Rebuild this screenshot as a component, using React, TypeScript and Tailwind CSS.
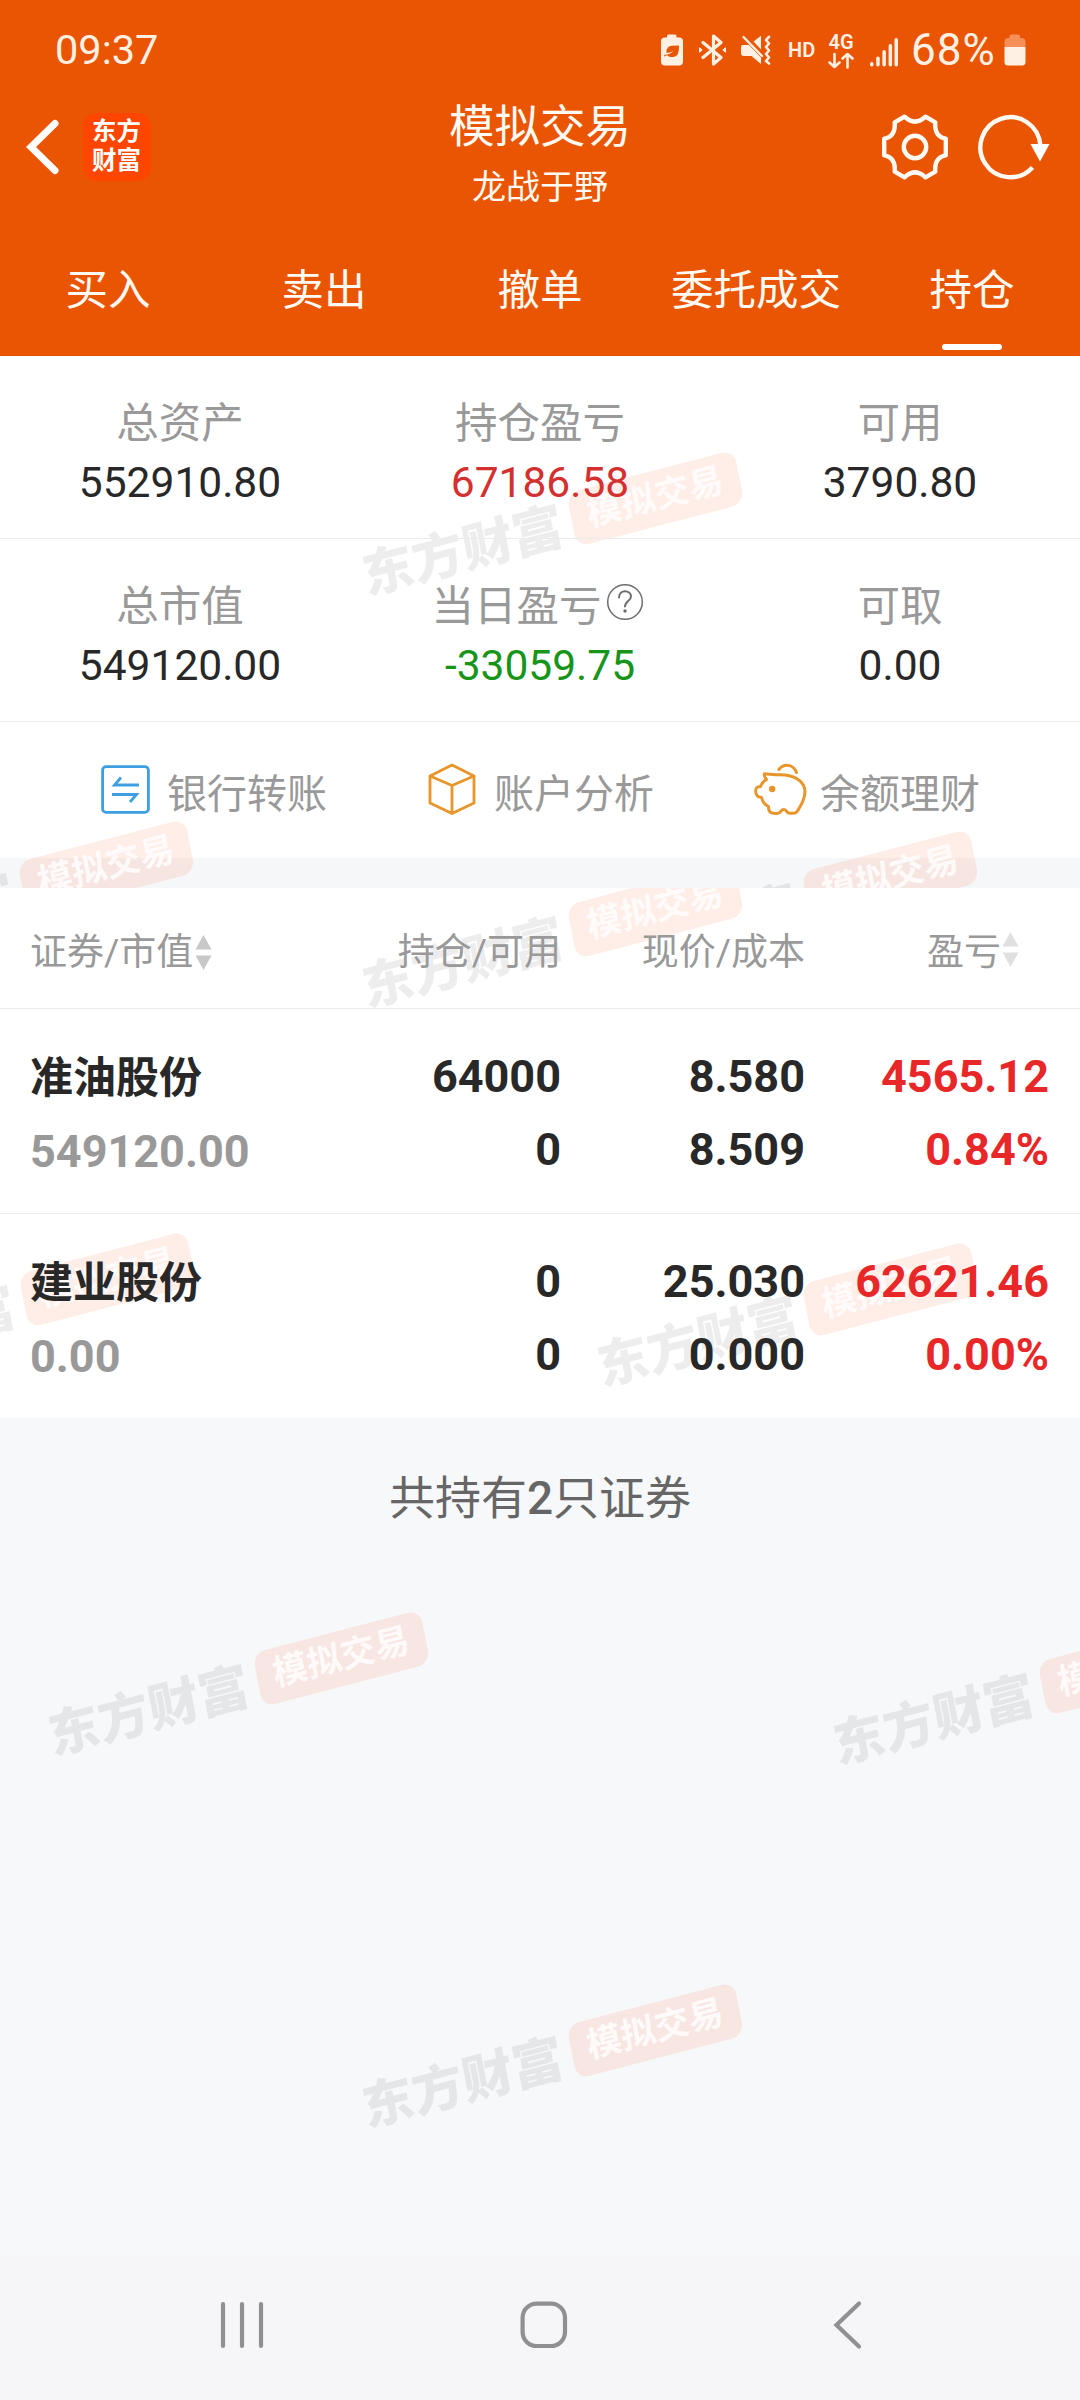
import React from "react";

const CREAM = "#fff0e4";

/* ---------- icons ---------- */

function LeafBattery() {
  return (
    <svg width="22" height="32" viewBox="0 0 22 32">
      <path d="M6 3.5V2Q6 .5 7.500 .5H14Q15.500 .5 15.500 2V3.500H18Q22 3.500 22 7.500V27.500Q22 31.500 18 31.500H4Q0 31.500 0 27.500V7.500Q0 3.500 4 3.500Z" fill={CREAM} />
      <path d="M18 11.500Q18.500 22.500 12.500 23Q8 23.500 6.500 21.500Q3.500 21 3.300 23Q3 22 3.300 20.800Q9 21 12.500 16.500Q9 19.500 5.300 18.500Q5.500 12 11 11.700Z" fill="#ea5504" />
    </svg>
  );
}

function BluetoothIcon() {
  return (
    <svg width="27" height="32" viewBox="0 0 27 32" fill="none" stroke={CREAM} strokeWidth="3.200" strokeLinecap="round" strokeLinejoin="round">
      <path d="M4 8.500 22 23.500 14.500 30V2L22 8.500 4 23.500" />
      <path d="M.8 14 3.200 16 .8 18ZM26.200 14 23.800 16 26.200 18Z" fill={CREAM} strokeWidth="1" />
    </svg>
  );
}

function MuteVibrateIcon() {
  return (
    <svg width="30" height="30" viewBox="0 0 30 30">
      <path d="M1.500 10H8L20 22.500V29L10.500 21H3Q0 21 0 18V12Q0 10 1.500 10Z" fill={CREAM} />
      <path d="M12.500 6.500 20 .8V14.500Z" fill={CREAM} />
      <path d="M2.500 2 21 21" stroke={CREAM} strokeWidth="2.400" strokeLinecap="round" />
      <path d="M28 1.800 25 5 28 8.500 25 12 28 15.500 25 19 28 22.500 25 26 28 28.500" fill="none" stroke={CREAM} strokeWidth="2.600" strokeLinecap="round" strokeLinejoin="round" />
    </svg>
  );
}

function DataArrows() {
  return (
    <svg width="26" height="17" viewBox="0 0 26 17" fill="none" stroke={CREAM} strokeWidth="2.600" strokeLinecap="round" strokeLinejoin="round">
      <path d="M6.500 2V15M1.500 10.500 6.500 15 11.500 10.500M19.500 15.500V2M14.500 6.500 19.500 2 24.500 6.500" />
    </svg>
  );
}

function SignalIcon() {
  return (
    <svg width="28" height="30" viewBox="0 0 28 30" fill={CREAM}>
      <rect x="0" y="25" width="3.500" height="4.500" rx="1.700" />
      <rect x="6.200" y="19.500" width="3.500" height="10" rx="1.700" />
      <rect x="12.400" y="13" width="3.500" height="16.500" rx="1.700" />
      <rect x="18.600" y="7" width="3.500" height="22.500" rx="1.700" />
      <rect x="24.500" y="1" width="3.500" height="28.500" rx="1.700" />
    </svg>
  );
}

function BatteryIcon() {
  return (
    <svg width="22" height="32" viewBox="0 0 22 32">
      <path d="M5.500 4V2.500Q5.500.5 7.500.5H14Q16 .5 16 2.500V4H17.500Q21.500 4 21.500 8V13H.5V8Q.5 4 4.500 4Z" fill="#f68e58" />
      <path d="M.5 13H21.500V28Q21.500 31.500 18 31.500H4Q.5 31.500 .5 28Z" fill={CREAM} />
    </svg>
  );
}

function GearIcon() {
  return (
    <svg width="68" height="68" viewBox="-34 -34 68 68" fill="none" stroke="#fffaf3" strokeWidth="4.400" strokeLinejoin="round">
      <path d="M-10.500-30.300Q0-20.500 10.500-30.300L20.300-24.700C19.500-15 23.500-9.500 30.800-8.300V8.300C23.500 9.500 19.500 15 20.300 24.700L10.500 30.300Q0 20.500-10.500 30.300L-20.300 24.700C-19.500 15-23.500 9.500-30.800 8.300V-8.300C-23.500-9.500-19.500-15-20.300-24.700Z" />
      <circle r="11.200" />
    </svg>
  );
}

function RefreshIcon() {
  return (
    <svg width="72" height="68" viewBox="-32 -34 72 68">
      <path d="M30.300-2A30 30 0 1 0 22.500 20.500" fill="none" stroke="#fffaf3" strokeWidth="4.400" />
      <path d="M20.500-3H39.500L30 14.500Z" fill="#fff" />
    </svg>
  );
}

function HelpIcon() {
  return (
    <svg width="38" height="38" viewBox="0 0 38 38" fill="none" stroke="#6e6e6e">
      <circle cx="19" cy="19" r="17.300" strokeWidth="1.500" />
      <path d="M13 14.500C13 6 25 6.500 25 13.500C25 18 19 18 19 23.500" strokeWidth="2" strokeLinecap="round" />
      <circle cx="19" cy="28" r="1.700" fill="#6e6e6e" stroke="none" />
    </svg>
  );
}

function TransferIcon() {
  return (
    <svg width="49" height="49" viewBox="0 0 49 49" fill="none" stroke="#3d9fe2" strokeWidth="2.800">
      <rect x="1.600" y="1.600" width="45.800" height="45.800" rx="3.500" />
      <path d="M38 20H13.500L20 12.500M11 29.500H35.500L29 37" />
    </svg>
  );
}

function CubeIcon() {
  return (
    <svg width="48" height="52" viewBox="0 0 48 52" fill="none" stroke="#e8952a" strokeWidth="2.800" strokeLinejoin="round">
      <path d="M24 2 46 13V40L24 50.500 2 40V13ZM2 13 24 22.500 46 13M24 22.500V50" />
    </svg>
  );
}

function PigIcon() {
  return (
    <svg width="53" height="53" viewBox="0 0 53 53" fill="none" stroke="#e8952a" strokeWidth="3" strokeLinecap="round" strokeLinejoin="round">
      <path d="M10.500 10.800C15 11 20 11.800 26 11.800C41 12 51 18.500 51 29C50.500 38 46 44 43.500 48Q42 50.300 39 50.300H36Q33.500 50.300 32.500 48Q29.500 45 27 48Q26 50.500 22 50.500C16.500 50.500 14.500 49 14.500 43.500C10.500 41.500 8.500 39 7.500 34.500C3 34 1.700 32 1.700 28C1.700 24.500 3 23.500 6.500 23.500C7.500 20.500 9.500 18 12.500 16.500C10.500 14 9.500 12.500 10.500 10.800Z" />
      <path d="M24.800 6.500C29.500.5 39 .5 42.500 9.500" />
      <circle cx="18.200" cy="26" r="3.200" fill="#e8952a" stroke="none" />
    </svg>
  );
}

function SortIcon({ faded = false }: { faded?: boolean }) {
  return (
    <svg width="17" height="35" viewBox="0 0 17 35" fill={faded ? "#e0e0e0" : "#c8c8c8"}>
      <path d="M8.500 0 16.500 14.500H.5ZM8.500 35 16.500 20.500H.5Z" />
    </svg>
  );
}

/* ---------- watermark ---------- */

/* x and y are the centre of the mark inside its clipped layer. */
function Watermark({ x, y }: { x: number; y: number }) {
  return (
    <div className="absolute h-0 w-0" style={{ left: x, top: y }}>
      <div className="absolute -left-[196px] -top-[29px] flex h-[58px] w-[389px] items-center justify-between whitespace-nowrap [transform:matrix(.968,-.252,.19,.98,0,0)]">
        <span className="text-[51.500px] leading-[58px] font-black text-black/7">东方财富</span>
        <span className="relative -top-[4px] flex h-[55px] w-[173px] items-center justify-center rounded-[13px] bg-[#ff5010]/10 text-[35px] leading-[50px] font-bold text-white/80">
          模拟交易
        </span>
      </div>
    </div>
  );
}

function WatermarkLayer({ marks }: { marks: [number, number][] }) {
  return (
    <div className="pointer-events-none absolute inset-0 overflow-hidden" aria-hidden="true">
      {marks.map(([x, y]) => (
        <Watermark key={`${x}-${y}`} x={x} y={y} />
      ))}
    </div>
  );
}

/* ---------- content ---------- */

const tabs = ["买入", "卖出", "撤单", "委托成交", "持仓"];

const summary = [
  [
    { label: "总资产", value: "552910.80", tone: "text-[#282828]" },
    { label: "持仓盈亏", value: "67186.58", tone: "text-[#d43030]" },
    { label: "可用", value: "3790.80", tone: "text-[#282828]" },
  ],
  [
    { label: "总市值", value: "549120.00", tone: "text-[#282828]" },
    { label: "当日盈亏", value: "-33059.75", tone: "text-[#17951a]", help: true },
    { label: "可取", value: "0.00", tone: "text-[#282828]" },
  ],
];

const holdings = [
  { name: "准油股份", value: "549120.00", qty: "64000", avail: "0", price: "8.580", cost: "8.509", pl: "4565.12", pct: "0.84%" },
  { name: "建业股份", value: "0.00", qty: "0", avail: "0", price: "25.030", cost: "0.000", pl: "62621.46", pct: "0.00%" },
];

const columns = "relative grid grid-cols-[262px_269px_244px_244px] pl-[30px]";

function StatusBar() {
  return (
    <div className="flex h-[91px] items-start justify-between pt-[25px] pr-[54px] pl-[55px] text-[#fff0e4]">
      <span className="text-[41.500px] leading-[50px]">09:37</span>
      <div className="flex h-[50px] items-center">
        <LeafBattery />
        <span className="ml-[16px]"><BluetoothIcon /></span>
        <span className="ml-[15px]"><MuteVibrateIcon /></span>
        <span className="ml-[17px] w-[27px] text-[20px] leading-5 font-semibold">HD</span>
        <span className="ml-[13px] flex w-[26px] flex-col items-center pt-[1px] text-[20px] leading-[19px] font-semibold">
          4G
          <DataArrows />
        </span>
        <span className="ml-4 pt-[3px]"><SignalIcon /></span>
        <span className="ml-[13px] w-[90px] text-[44px] leading-[50px] tracking-[1px]">68%</span>
        <span className="ml-[3px]"><BatteryIcon /></span>
      </div>
    </div>
  );
}

function Header() {
  return (
    <header className="bg-[#ea5504] text-[#fffaf3]">
      <StatusBar />
      <div className="grid h-[123px] grid-cols-3 items-start">
        <div className="flex h-[112px] items-center pl-[25px]">
          <svg width="36" height="58" viewBox="0 0 36 58" fill="none" stroke="#fff" strokeWidth="7" strokeLinecap="round">
            <path d="M30 5.500 6 29 30 52.500" />
          </svg>
          <div className="ml-[22px] flex h-[68px] w-[68px] flex-col items-center justify-center rounded-[14px] bg-[#ff4600] pr-[1px] pb-[2px] text-[24.500px] leading-[29px] font-bold text-white">
            <span>东方</span>
            <span>财富</span>
          </div>
        </div>
        <div className="flex flex-col items-center pt-[7px]">
          <h1 className="text-[45.500px] leading-[60px]">模拟交易</h1>
          <p className="text-[34px] leading-[58px]">龙战于野</p>
        </div>
        <div className="flex h-[112px] items-center justify-end pr-[30px]">
          <GearIcon />
          <span className="ml-[29px]"><RefreshIcon /></span>
        </div>
      </div>
      <nav className="grid h-[142px] grid-cols-5">
        {tabs.map((tab, i) => (
          <div key={tab} className="flex flex-col items-center justify-between pt-[47px] pb-[6px]">
            <span className="text-[42.500px] leading-[60px]">{tab}</span>
            {i === 4 && <span className="h-[6px] w-[60px] rounded-full bg-white" />}
          </div>
        ))}
      </nav>
    </header>
  );
}

function Shortcut({ icon, label }: { icon: React.ReactNode; label: string }) {
  return (
    <div className="flex h-14 items-center">
      <span className="-mt-[6px] flex w-[66px]">{icon}</span>
      <span className="pt-[6px] text-[40px] leading-[50px] text-[#999]">{label}</span>
    </div>
  );
}

function Summary() {
  return (
    <section className="relative bg-[linear-gradient(to_top,#f6f7f9_30px,#ffffff_30px)] pb-[30px]">
      <WatermarkLayer marks={[[553, 173], [4, 542], [788, 552]]} />
      {summary.map((row, i) => (
        <div key={i} className="relative grid h-[183px] grid-cols-3 border-b border-[#ebebeb] pt-[38px]">
          {row.map((cell) => (
            <div key={cell.label} className="flex flex-col items-center">
              <div className="flex h-[60px] items-center text-[42.500px] leading-[60px] text-[#999]">
                {cell.label}
                {"help" in cell && <span className="mr-[5px] ml-[4px] pb-[10px]"><HelpIcon /></span>}
              </div>
              <div className={`text-[42.500px] leading-[57px] ${cell.tone}`}>{cell.value}</div>
            </div>
          ))}
        </div>
      ))}
      <div className="relative grid h-[136px] grid-cols-[327px_326px_1fr] items-start pt-[42px] pl-[101px]">
        <Shortcut icon={<TransferIcon />} label="银行转账" />
        <Shortcut icon={<CubeIcon />} label="账户分析" />
        <Shortcut icon={<PigIcon />} label="余额理财" />
      </div>
    </section>
  );
}

function Holdings() {
  return (
    <section className="relative bg-white">
      <WatermarkLayer marks={[[553, 53], [5, 422], [788, 432]]} />
      <div className={`${columns} h-[121px] border-b border-[#ebebeb] pt-[35px] text-[37px] leading-[60px] text-[#999]`}>
        <div className="flex h-[60px] items-center">
          证券/市值
          <span className="-mt-[1px] ml-[2px]"><SortIcon /></span>
        </div>
        <div className="text-right">持仓/可用</div>
        <div className="text-right">现价/成本</div>
        <div className="flex h-[60px] items-center justify-end pr-[30px]">
          盈亏
          <span className="-mt-[7px] ml-[1px]"><SortIcon faded /></span>
        </div>
      </div>
      {holdings.map((h, i) => (
        <div
          key={h.name}
          className={`${columns} pt-[31px] text-[45px] leading-[73px] font-bold text-[#282828] ${i === 0 ? "h-[205px] border-b border-[#ebebeb]" : "h-[204px]"}`}
        >
          <div>
            <div className="pt-[2px] text-[43px] leading-[73px] font-bold">{h.name}</div>
            <div className="text-[#999]">{h.value}</div>
          </div>
          <div className="text-right">
            <div>{h.qty}</div>
            <div>{h.avail}</div>
          </div>
          <div className="text-right">
            <div>{h.price}</div>
            <div>{h.cost}</div>
          </div>
          <div className="text-right text-[#e82729]">
            <div>{h.pl}</div>
            <div>{h.pct}</div>
          </div>
        </div>
      ))}
    </section>
  );
}

function SystemNav() {
  return (
    <footer className="flex h-[144px] items-start bg-[#f6f6f8] pt-[44px] pl-[219px]">
      <svg width="48" height="50" viewBox="0 0 48 50" stroke="#909090" strokeWidth="4.200" strokeLinecap="round">
        <path d="M4 4V46M23 4V46M42 4V46" />
      </svg>
      <svg className="ml-[252px]" width="50" height="50" viewBox="0 0 50 50" fill="none" stroke="#909090" strokeWidth="4.200">
        <rect x="3.600" y="3.600" width="42.400" height="42.400" rx="14" />
      </svg>
      <svg className="ml-[264px]" width="30" height="50" viewBox="0 0 30 50" fill="none" stroke="#909090" strokeWidth="4.200" strokeLinecap="round">
        <path d="M26 3.500 3.500 25 26 46.500" />
      </svg>
    </footer>
  );
}

export default function App() {
  return (
    <div className="flex h-[2400px] w-[1080px] flex-col overflow-hidden bg-[#f7f8fa] font-['Roboto','Noto_Sans_CJK_SC',sans-serif]" lang="zh-CN">
      <Header />
      <Summary />
      <Holdings />
      <main className="relative flex-1 pt-[50px] text-center text-[46px] leading-[60px] text-[#666]">
        <WatermarkLayer marks={[[239, 271], [1024, 280], [553, 643]]} />
        <p className="relative">
          共持有<span className="font-medium">2</span>只证券
        </p>
      </main>
      <SystemNav />
    </div>
  );
}
